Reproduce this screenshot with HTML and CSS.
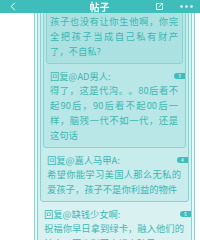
FILE: index.html
```html
<!DOCTYPE html>
<html lang="zh">
<head>
<meta charset="utf-8">
<title>帖子</title>
<link rel="stylesheet" href="styles.css">
</head>
<body>
<header class="bar">
  <svg class="back" width="6" height="9" viewBox="0 0 6 9"><path d="M4.8 0.8L1.3 4.5l3.5 3.7" fill="none" stroke="#fff" stroke-width="1"/></svg>
  <h1 class="title">帖子</h1>
  <div class="actions">
    <svg class="edit" width="9" height="9" viewBox="0 0 9 9"><path d="M4.5 1.5H1.5v6h6v-3" fill="none" stroke="#fff" stroke-width="0.9"/><path d="M3.8 5.2L7.6 1.4M5.4 1.4h2.2v2.2" fill="none" stroke="#fff" stroke-width="0.9"/></svg>
    <svg class="more" width="13" height="3" viewBox="0 0 13 3"><circle cx="1.5" cy="1.5" r="1.2" fill="#fff"/><circle cx="6.5" cy="1.5" r="1.2" fill="#fff"/><circle cx="11.5" cy="1.5" r="1.2" fill="#fff"/></svg>
  </div>
</header>
<main class="thread">
  <div class="q">
    <div class="q">
      <div class="q">
        <div class="q">
          <div class="q q-root">
            <div class="body body-root">
              <p class="txt">孩子也没有让你生他啊，你完全把孩子当成自己私有财产了，不自私?</p>
            </div>
          </div>
          <div class="body">
            <div class="who"><span>回复@AD男人:</span><span class="floor">3</span></div>
            <p class="txt">得了，这是代沟。。80后看不起90后，90后看不起00后一样，脑残一代不如一代，还是这句话</p>
          </div>
        </div>
        <div class="body">
          <div class="who"><span>回复@嘉人马甲A:</span><span class="floor">4</span></div>
          <p class="txt">希望你能学习美国人那么无私的爱孩子，孩子不是你利益的物件</p>
        </div>
      </div>
      <div class="body">
        <div class="who"><span>回复@缺钱少女啊:</span><span class="floor">5</span></div>
        <p class="txt">祝福你早日拿到绿卡，融入他们的社会，再也别回来祸害孩子了</p>
      </div>
    </div>
  </div>
</main>
</body>
</html>
```
FILE: styles.css
```css
html, body {
  margin: 0;
  padding: 0;
  background: #ffffff;
  overflow: hidden;
  font-family: "Noto Sans CJK SC", "Noto Sans", sans-serif;
}

.bar {
  position: fixed;
  top: 0;
  left: 0;
  right: 0;
  height: 13px;
  z-index: 2;
  background: #3fbdbb;
  display: grid;
  grid-template-columns: 1fr auto 1fr;
  align-items: center;
}

.back {
  margin-left: 10px;
  display: block;
}

.title {
  margin: 0;
  font-size: 10px;
  line-height: 13px;
  font-weight: 700;
  color: #ffffff;
  padding-right: 1px;
}

.actions {
  display: flex;
  justify-content: flex-end;
  align-items: center;
  gap: 16px;
  padding-right: 7px;
}

.edit, .more {
  display: block;
}

.thread {
  margin: -5px 5px 0 34px;
}

.q {
  border: 1px solid #84d5d3;
  border-radius: 3px;
  padding: 2px 2px 0;
  background: rgba(63, 189, 187, 0.1);
}

.q-root {
  padding: 0;
}

.body {
  padding: 6px 5px 4px 4px;
  color: #3bb7b5;
  font-size: 9.3px;
  text-spacing-trim: space-all;
}

.body-root {
  padding: 6px 4px 4px 3px;
}

.who {
  display: flex;
  justify-content: space-between;
  align-items: center;
  line-height: 13px;
  margin-right: -7px;
}

.floor {
  width: 11px;
  height: 6px;
  border-radius: 3px 0 0 3px;
  background: #3fbdbb;
  color: #ffffff;
  font-size: 5px;
  line-height: 6px;
  text-align: center;
  margin-top: -1px;
}

.txt {
  margin: 0;
  line-height: 15px;
  text-align: justify;
}
```
